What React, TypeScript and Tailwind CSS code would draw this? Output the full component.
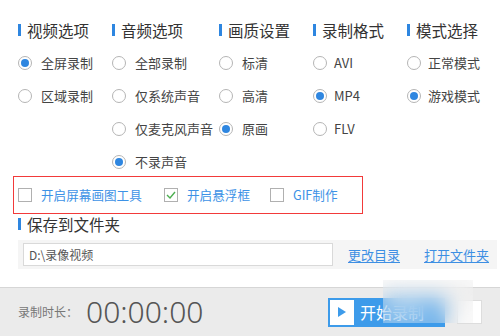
import React from "react";

const font = { fontFamily: '"Noto Sans CJK SC", "Noto Sans", sans-serif' };

function Radio({ checked }: { checked?: boolean }) {
  return (
    <span className="flex h-[14px] w-[14px] shrink-0 items-center justify-center rounded-full border border-[#b5b5b5] bg-white">
      {checked && <span className="h-[8px] w-[8px] rounded-full bg-[#2e86e0]" />}
    </span>
  );
}

function Header({ label }: { label: string }) {
  return (
    <div className="flex h-[20px] items-center">
      <span className="h-[12px] w-[3px] bg-[#2e86e0]" />
      <span className="ml-[6px] text-[15.5px] leading-[20px] text-[#333]">{label}</span>
    </div>
  );
}

function Opt({ label, checked, gap = 9 }: { label: string; checked?: boolean; gap?: number }) {
  return (
    <div className="flex h-[33px] items-center">
      <Radio checked={checked} />
      <span className="text-[13px] text-[#444] whitespace-nowrap" style={{ marginLeft: gap }}>
        {label}
      </span>
    </div>
  );
}

function Check({ checked, label }: { checked?: boolean; label: string }) {
  return (
    <div className="flex items-center">
      <span className="flex h-[14px] w-[14px] items-center justify-center border border-[#b0b0b0] bg-white">
        {checked && (
          <svg width="10" height="8" viewBox="0 0 10 8">
            <path d="M1 4 L4 7 L9 1" fill="none" stroke="#4caf50" strokeWidth="1.4" />
          </svg>
        )}
      </span>
      <span className="ml-[9px] text-[12.6px] text-[#3d92e6] whitespace-nowrap">{label}</span>
    </div>
  );
}

export default function App() {
  return (
    <div className="relative h-[336px] w-[500px] overflow-hidden bg-white" style={font}>
      <div className="flex h-[176px] pt-[20px] pl-[18px]">
        <div className="w-[94px]">
          <Header label="视频选项" />
          <div className="mt-[6px]">
            <Opt label="全屏录制" checked />
            <Opt label="区域录制" />
          </div>
        </div>
        <div className="w-[107px]">
          <Header label="音频选项" />
          <div className="mt-[6px]">
            <Opt label="全部录制" />
            <Opt label="仅系统声音" />
            <Opt label="仅麦克风声音" />
            <Opt label="不录声音" checked />
          </div>
        </div>
        <div className="w-[94px]">
          <Header label="画质设置" />
          <div className="mt-[6px]">
            <Opt label="标清" />
            <Opt label="高清" />
            <Opt label="原画" checked />
          </div>
        </div>
        <div className="w-[94px]">
          <Header label="录制格式" />
          <div className="mt-[6px]">
            <Opt label="AVI" gap={7} />
            <Opt label="MP4" checked gap={7} />
            <Opt label="FLV" gap={7} />
          </div>
        </div>
        <div className="flex-1">
          <Header label="模式选择" />
          <div className="mt-[6px]">
            <Opt label="正常模式" gap={7} />
            <Opt label="游戏模式" checked gap={7} />
          </div>
        </div>
      </div>

      <div className="ml-[13px] flex h-[38px] w-[350px] items-center border border-[#f23a3a] pl-[4px]">
        <div className="w-[146px]">
          <Check label="开启屏幕画图工具" />
        </div>
        <div className="w-[106px]">
          <Check checked label="开启悬浮框" />
        </div>
        <Check label="GIF制作" />
      </div>

      <div className="pl-[18px]">
        <Header label="保存到文件夹" />
      </div>

      <div className="ml-[18px] mt-[6px] flex h-[29px] w-[479px] items-center bg-[#f5f5f5] pl-[5px]">
        <div className="flex h-[23px] w-[310px] items-center border border-[#d9d9d9] bg-white pl-[5px] text-[12px] text-[#555]">
          D:\录像视频
        </div>
        <span className="ml-[15px] text-[13px] text-[#3d8fe3] underline underline-offset-2">更改目录</span>
        <span className="ml-[24px] text-[13px] text-[#3d8fe3] underline underline-offset-2">打开文件夹</span>
      </div>

      <div className="mt-[18px] flex h-[49px] items-center border-t border-[#d6d6d6] bg-[#ebebeb] pl-[18px]">
        <div className="flex w-[310px] items-center">
          <span className="text-[12px] text-[#777]">录制时长：</span>
          <span
            className="ml-[8px] text-[30px] font-light leading-none text-[#555]"
            style={{ fontFamily: '"Noto Sans", "Open Sans", sans-serif' }}
          >
            00:00:00
          </span>
        </div>
        <div className="flex h-[29px] w-[117px] items-center bg-[#3d9bea] pl-[2px]">
          <span className="flex h-[25px] w-[24px] items-center justify-center bg-white">
            <svg width="8" height="10" viewBox="0 0 8 10">
              <path d="M0 0 L8 5 L0 10 Z" fill="#3d9bea" />
            </svg>
          </span>
          <span className="ml-[6px] text-[16px] text-white">开始录制</span>
        </div>
        <span className="ml-[12px] h-[24px] w-[25px] border border-[#ddd] bg-white" />
      </div>

      <div className="absolute left-[383px] top-[280px] h-[43px] w-[90px] bg-[#eeeeee]/30 backdrop-blur-[10px]" />
    </div>
  );
}
